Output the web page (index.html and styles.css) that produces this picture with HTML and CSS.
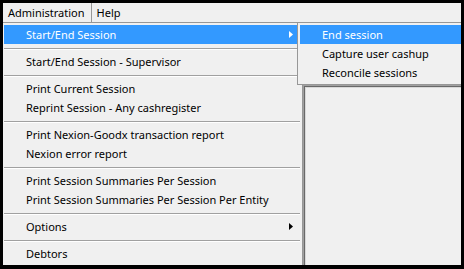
FILE: index.html
```html
<!DOCTYPE html>
<html>

<head>
    <meta charset="utf-8">
    <title>Administration</title>
    <link rel="stylesheet" href="styles.css">
</head>

<body>
    <div class="window">
        <div class="menubar">
            <span class="menubar-item is-open">Administration</span>
            <span class="menubar-item">Help</span>
        </div>

        <div class="client">
            <div class="panel"></div>
        </div>

        <!-- Administration dropdown -->
        <ul class="menu menu-admin">
            <li class="menu-item is-active">
                <span>Start/End Session</span>
                <svg class="arrow" width="4" height="7" viewBox="0 0 4 7"><path d="M0 0L4 3.5L0 7Z"/></svg>
            </li>
            <li class="menu-sep"></li>
            <li class="menu-item"><span>Start/End Session - Supervisor</span></li>
            <li class="menu-sep"></li>
            <li class="menu-item"><span>Print Current Session</span></li>
            <li class="menu-item"><span>Reprint Session - Any cashregister</span></li>
            <li class="menu-sep"></li>
            <li class="menu-item"><span>Print Nexion-Goodx transaction report</span></li>
            <li class="menu-item"><span>Nexion error report</span></li>
            <li class="menu-sep"></li>
            <li class="menu-item"><span>Print Session Summaries Per Session</span></li>
            <li class="menu-item"><span>Print Session Summaries Per Session Per Entity</span></li>
            <li class="menu-sep"></li>
            <li class="menu-item">
                <span>Options</span>
                <svg class="arrow" width="4" height="7" viewBox="0 0 4 7"><path d="M0 0L4 3.5L0 7Z"/></svg>
            </li>
            <li class="menu-sep"></li>
            <li class="menu-item"><span>Debtors</span></li>
        </ul>

        <!-- Start/End Session submenu -->
        <ul class="menu menu-session">
            <li class="menu-item is-active"><span>End session</span></li>
            <li class="menu-item"><span>Capture user cashup</span></li>
            <li class="menu-item"><span>Reconcile sessions</span></li>
        </ul>
    </div>
</body>

</html>
```

FILE: styles.css
```css
* {
    box-sizing: border-box;
}

html,
body {
    margin: 0;
    padding: 0;
    background-color: #000000;
}

.window {
    position: relative;
    overflow: hidden;
    width: 458px;
    height: 262px;
    margin: 3px 3px 4px 3px;
    background-color: #f0f0f0;
    font-family: "Noto Sans", "Open Sans", sans-serif;
    font-size: 11px;
    color: #000000;
}

.menubar {
    display: flex;
    height: 19px;
    line-height: 19px;
}

.menubar-item {
    padding: 0 6px 0 5px;
    white-space: nowrap;
}

.menubar-item.is-open {
    padding-right: 6px;
    border-right: 1px solid #979797;
}

.client {
    display: flex;
    height: 243px;
    padding: 63px 0 0 300px;
}

.panel {
    flex-grow: 1;
    border-top: 1px solid #a0a0a0;
    border-left: 1px solid #a0a0a0;
    box-shadow: inset 1px 1px 0 #696969, inset 2px 2px 0 #d8d8d8;
}

.menu {
    position: absolute;
    top: 19px;
    list-style: none;
    margin: 0;
    padding: 2px;
    background-color: #f0f0f0;
    border: 1px solid #979797;
}

.menu-admin {
    left: -2px;
    width: 302px;
}

.menu-session {
    left: 294px;
    right: -3px;
}

.menu-item {
    display: flex;
    align-items: center;
    justify-content: space-between;
    height: 19px;
    line-height: 19px;
    padding: 0 7px 0 22px;
    white-space: nowrap;
}

.menu-item.is-active {
    background-color: #3399ff;
    color: #ffffff;
}

.menu-item .arrow {
    fill: #000000;
}

.menu-item.is-active .arrow {
    fill: #ffffff;
}

.menu-sep {
    height: 0;
    margin: 4px 0 2px 0;
    border-top: 1px solid #a0a0a0;
    border-bottom: 1px solid #ffffff;
}
```
